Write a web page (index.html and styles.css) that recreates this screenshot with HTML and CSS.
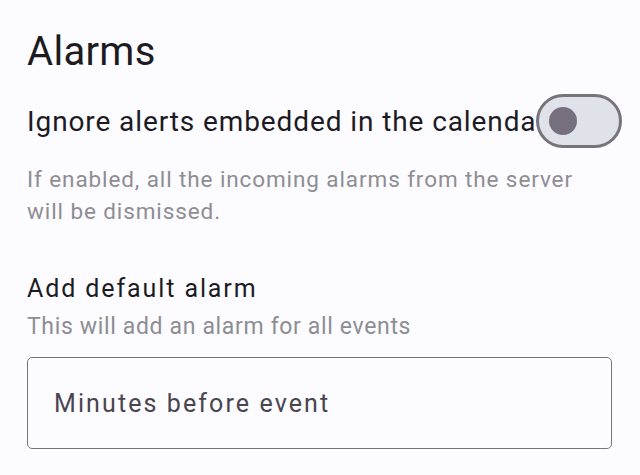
FILE: index.html
```html
<!DOCTYPE html>
<html lang="en">
  <head>
    <meta charset="UTF-8" />
    <meta name="viewport" content="width=device-width, initial-scale=1.0" />
    <title>Alarms</title>
    <link rel="stylesheet" href="styles.css">
  </head>
  <body>
    <div class="settings">
      <h1 class="title">Alarms</h1>

      <!-- переключатель: игнорировать встроенные напоминания -->
      <div class="switchRow">
        <span class="switchLabel">Ignore alerts embedded in the calendar</span>
        <span class="switch"><span class="knob"></span></span>
      </div>
      <p class="hint">If enabled, all the incoming alarms from the server will be dismissed.</p>

      <div class="field">
        <div class="fieldTitle">Add default alarm</div>
        <div class="fieldHint">This will add an alarm for all events</div>
        <div class="input">Minutes before event</div>
      </div>
    </div>
  </body>
</html>
```

FILE: styles.css
```css
:root {
  --main-font: Roboto, "Noto Sans", sans-serif;
  --text-color: #1c1b1f;
  --hint-color: #8e8d92;
  --outline: #77737c;
}
* {
  margin: 0;
  box-sizing: border-box;
  font-family: var(--main-font);
}
body {
  background: #fcfbff;
  overflow: hidden;
}
.settings {
  padding: 28px 18px 0 27px;
  width: 640px;
}
.title {
  font-size: 40px;
  font-weight: 400;
  letter-spacing: 0.3px;
  color: var(--text-color);
  line-height: 48px;
}
.switchRow {
  display: flex;
  align-items: center;
  height: 54px;
  margin-top: 18px;
}
/* текст уходит под переключатель */
.switchLabel {
  flex: 1;
  font-size: 28px;
  letter-spacing: 0.9px;
  color: var(--text-color);
  white-space: nowrap;
  overflow: hidden;
}
.switch {
  flex: none;
  width: 86px;
  height: 54px;
  border: 3px solid var(--outline);
  border-radius: 27px;
  background: #e0e2e9;
  display: flex;
  align-items: center;
  padding-left: 10px;
}
.knob {
  width: 28px;
  height: 28px;
  border-radius: 50%;
  background: #76707e;
}
.hint {
  margin-top: 15px;
  font-size: 22.5px;
  letter-spacing: 0.9px;
  line-height: 32px;
  color: var(--hint-color);
  padding-right: 12px;
}
.field {
  margin-top: 46px;
}
.fieldTitle {
  font-size: 25px;
  letter-spacing: 1.9px;
  color: var(--text-color);
  line-height: 32px;
}
.fieldHint {
  margin-top: 6px;
  font-size: 23px;
  letter-spacing: 0.65px;
  color: var(--hint-color);
  line-height: 32px;
}
.input {
  margin-top: 14px;
  width: 585px;
  height: 92px;
  border: 1.5px solid var(--outline);
  border-radius: 5px;
  padding-left: 26px;
  display: flex;
  align-items: center;
  font-size: 25px;
  letter-spacing: 2.1px;
  color: #49454f;
}
```
